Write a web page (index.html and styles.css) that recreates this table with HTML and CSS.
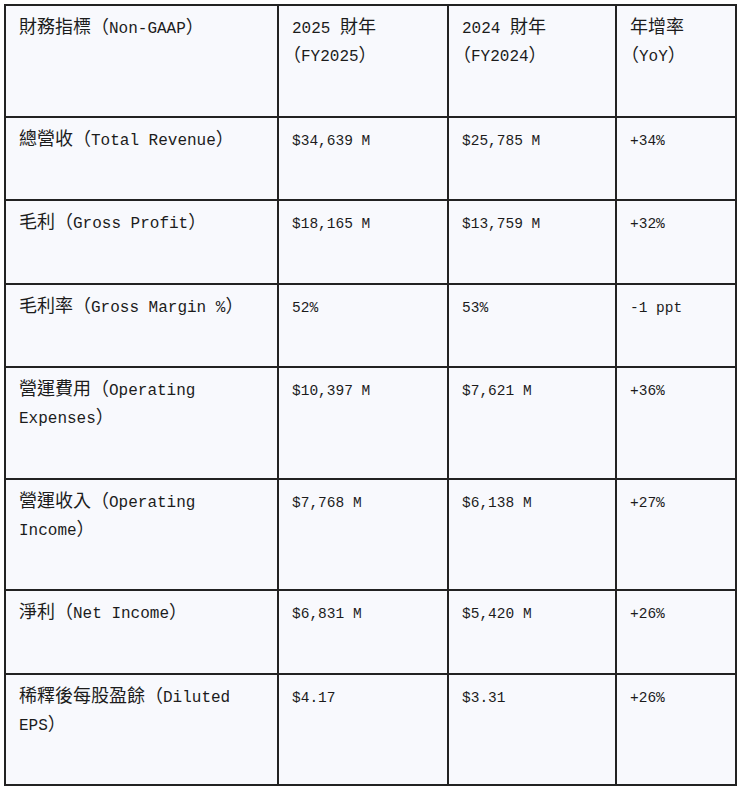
FILE: index.html
```html
<!DOCTYPE html>
<html lang="zh-Hant">
<head>
<meta charset="utf-8">
<title>財務指標</title>
<link rel="stylesheet" href="styles.css">
</head>
<body>
<div class="page">
<table class="fin">
<colgroup>
<col class="c1"><col class="c2"><col class="c3"><col class="c4">
</colgroup>
<thead>
<tr>
<th><span class="zh">財務指標（</span>Non-GAAP<span class="zh">）</span></th>
<th>2025 <span class="zh">財年</span><br><span class="zh">（</span>FY2025<span class="zh">）</span></th>
<th>2024 <span class="zh">財年</span><br><span class="zh">（</span>FY2024<span class="zh">）</span></th>
<th><span class="zh">年增率</span><br><span class="zh">（</span>YoY<span class="zh">）</span></th>
</tr>
</thead>
<tbody>
<tr>
<td><span class="zh">總營收（</span>Total Revenue<span class="zh">）</span></td>
<td class="num">$34,639 M</td>
<td class="num">$25,785 M</td>
<td class="num">+34%</td>
</tr>
<tr>
<td><span class="zh">毛利（</span>Gross Profit<span class="zh">）</span></td>
<td class="num">$18,165 M</td>
<td class="num">$13,759 M</td>
<td class="num">+32%</td>
</tr>
<tr>
<td><span class="zh">毛利率（</span>Gross Margin %<span class="zh">）</span></td>
<td class="num">52%</td>
<td class="num">53%</td>
<td class="num">-1 ppt</td>
</tr>
<tr>
<td><span class="zh">營運費用（</span>Operating Expenses<span class="zh">）</span></td>
<td class="num">$10,397 M</td>
<td class="num">$7,621 M</td>
<td class="num">+36%</td>
</tr>
<tr>
<td><span class="zh">營運收入（</span>Operating Income<span class="zh">）</span></td>
<td class="num">$7,768 M</td>
<td class="num">$6,138 M</td>
<td class="num">+27%</td>
</tr>
<tr>
<td><span class="zh">淨利（</span>Net Income<span class="zh">）</span></td>
<td class="num">$6,831 M</td>
<td class="num">$5,420 M</td>
<td class="num">+26%</td>
</tr>
<tr>
<td><span class="zh">稀釋後每股盈餘（</span>Diluted EPS<span class="zh">）</span></td>
<td class="num">$4.17</td>
<td class="num">$3.31</td>
<td class="num">+26%</td>
</tr>
</tbody>
</table>
</div>
</body>
</html>
```
FILE: styles.css
```css
html, body {
  margin: 0;
  padding: 0;
  background: #ffffff;
}

.page {
  padding: 4px 0 0 4px;
}

.fin {
  border-collapse: collapse;
  table-layout: fixed;
  width: 731px;
  background: #f8f9fd;
  color: #1c1c1c;
  font-family: "Liberation Mono", "Noto Sans CJK TC", monospace;
  font-size: 16px;
  line-height: 28px;
  border: 2px solid #222222;
}

.c1 { width: 273px; }
.c2 { width: 170px; }
.c3 { width: 168px; }
.c4 { width: 120px; }

.fin th,
.fin td {
  border: 2px solid #222222;
  padding: 9px 12px 44.5px 13px;
  text-align: left;
  vertical-align: top;
  font-weight: normal;
  text-spacing-trim: trim-start;
}

.fin .num {
  font-size: 14.5px;
}

.zh {
  font-family: "Noto Sans CJK TC", sans-serif;
  font-size: 18px;
  line-height: 18px;
}
```
